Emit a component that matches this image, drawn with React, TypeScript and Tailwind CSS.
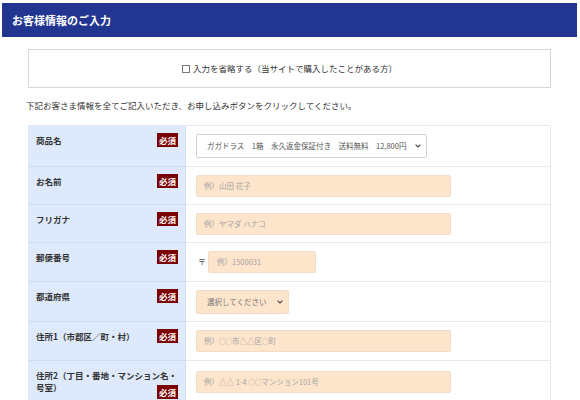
import React from "react";

const FONT = { fontFamily: '"Noto Sans CJK JP", "Noto Sans", sans-serif' };

function Badge({ className = "" }: { className?: string }) {
  return (
    <span
      className={`w-[21px] h-[14px] shrink-0 bg-[#7b0000] text-white text-[8.5px] font-bold leading-[14px] flex items-center justify-center ${className}`}
    >
      必須
    </span>
  );
}

function Chevron() {
  return (
    <svg width="6" height="4" viewBox="0 0 6 4" className="shrink-0">
      <path d="M0.6 0.6 L3 3 L5.4 0.6" fill="none" stroke="#444" strokeWidth="1.1" />
    </svg>
  );
}

function Row({
  label,
  h,
  children,
  last = false,
}: {
  label: React.ReactNode;
  h: string;
  children: React.ReactNode;
  last?: boolean;
}) {
  return (
    <div className={`flex ${h} ${last ? "" : "border-b"} border-[#e6eaf0]`}>
      <div
        className={`w-[158px] shrink-0 bg-[#deeafb] border-r border-[#d2def0] pl-[8px] pr-[7px] pt-[7px] ${
          last ? "" : "border-b -mb-px"
        } border-b-[#cfdbee]`}
      >
        {label}
      </div>
      <div className="flex-1 flex items-center pl-[10px] border-r border-[#e6eaf0]">{children}</div>
    </div>
  );
}

function SimpleLabel({ text }: { text: string }) {
  return (
    <div className="flex justify-between items-start">
      <span className="text-[8.5px] font-bold text-[#333] leading-[14px] whitespace-nowrap">{text}</span>
      <Badge />
    </div>
  );
}

function PeachInput({ children, w }: { children: React.ReactNode; w: string }) {
  return (
    <div
      className={`${w} h-[22px] bg-[#fde5cb] border border-[#f2dcc4] rounded-[2px] flex items-center pl-[7px] text-[7.5px] text-[#a3a3a3] whitespace-nowrap`}
    >
      <span>{children}</span>
    </div>
  );
}

function Circ({ n = 2 }: { n?: number }) {
  return <span className="text-[6.5px]">{n === 2 ? "○○" : "○"}</span>;
}

export default function App() {
  return (
    <div className="w-[580px] h-[400px] overflow-hidden bg-white pt-[3px] pl-[2px] pr-[3px]" style={FONT}>
      <div className="h-[34px] bg-[#213591] flex items-center pl-[10px] text-white font-bold text-[11px]">
        お客様情報のご入力
      </div>
      <div className="mx-[26px]">
        <div className="mt-[12px] h-[39px] border border-[#d6d6d6] flex items-center justify-center text-[8.5px] text-[#333]">
          <span className="w-[8px] h-[8px] border border-[#777] mr-[3px] bg-white" />
          <span>入力を省略する（当サイトで購入したことがある方）</span>
        </div>
        <p className="mt-[11px] h-[12px] leading-[12px] text-[8.5px] text-[#333] -ml-[2px] whitespace-nowrap">
          下記お客さま情報を全てご記入いただき、お申し込みボタンをクリックしてください。
        </p>
        <div className="mt-[14px] border-t border-[#e6eaf0]">
          <Row h="h-[41px]" label={<SimpleLabel text="商品名" />}>
            <div className="w-[231px] h-[24px] bg-white border border-[#cfcfcf] rounded-[2px] flex items-center justify-between pl-[10px] pr-[5px] text-[7.5px] text-[#555] whitespace-nowrap">
              <span>ガガドラス　1箱　永久返金保証付き　送料無料　12,800円</span>
              <Chevron />
            </div>
          </Row>
          <Row h="h-[38px]" label={<SimpleLabel text="お名前" />}>
            <PeachInput w="w-[255px]">例）山田 花子</PeachInput>
          </Row>
          <Row h="h-[38px]" label={<SimpleLabel text="フリガナ" />}>
            <PeachInput w="w-[255px]">例）ヤマダ ハナコ</PeachInput>
          </Row>
          <Row h="h-[39px]" label={<SimpleLabel text="郵便番号" />}>
            <span className="text-[8px] text-[#555] ml-[2px] mr-[2px]">〒</span>
            <div className="w-[108px] h-[22px] bg-[#fde5cb] border border-[#f2dcc4] rounded-[2px] flex items-center pl-[8px] text-[7.5px] text-[#a3a3a3]">
              例）1500031
            </div>
          </Row>
          <Row h="h-[40px]" label={<SimpleLabel text="都道府県" />}>
            <div className="w-[93px] h-[24px] bg-[#fde5cb] border border-[#f2dcc4] rounded-[2px] flex items-center justify-between pl-[10px] pr-[5px] text-[7.5px] text-[#777] whitespace-nowrap">
              <span>選択してください</span>
              <Chevron />
            </div>
          </Row>
          <Row h="h-[39px]" label={<SimpleLabel text="住所1（市郡区／町・村）" />}>
            <PeachInput w="w-[255px]">
              例）<Circ />市△△区<Circ n={1} />町
            </PeachInput>
          </Row>
          <Row
            h="h-[45px]"
            last
            label={
              <div className="text-[8.5px] font-bold text-[#333] leading-[12px] pt-[1px]">
                <div className="whitespace-nowrap">住所2（丁目・番地・マンション名・</div>
                <div className="flex justify-between items-start">
                  <span>号室）</span>
                  <Badge className="mt-[4px]" />
                </div>
              </div>
            }
          >
            <div className="self-start mt-[10px]">
              <PeachInput w="w-[255px]">
                例）△△ 1-4 <Circ />マンション101号
              </PeachInput>
            </div>
          </Row>
        </div>
      </div>
    </div>
  );
}
